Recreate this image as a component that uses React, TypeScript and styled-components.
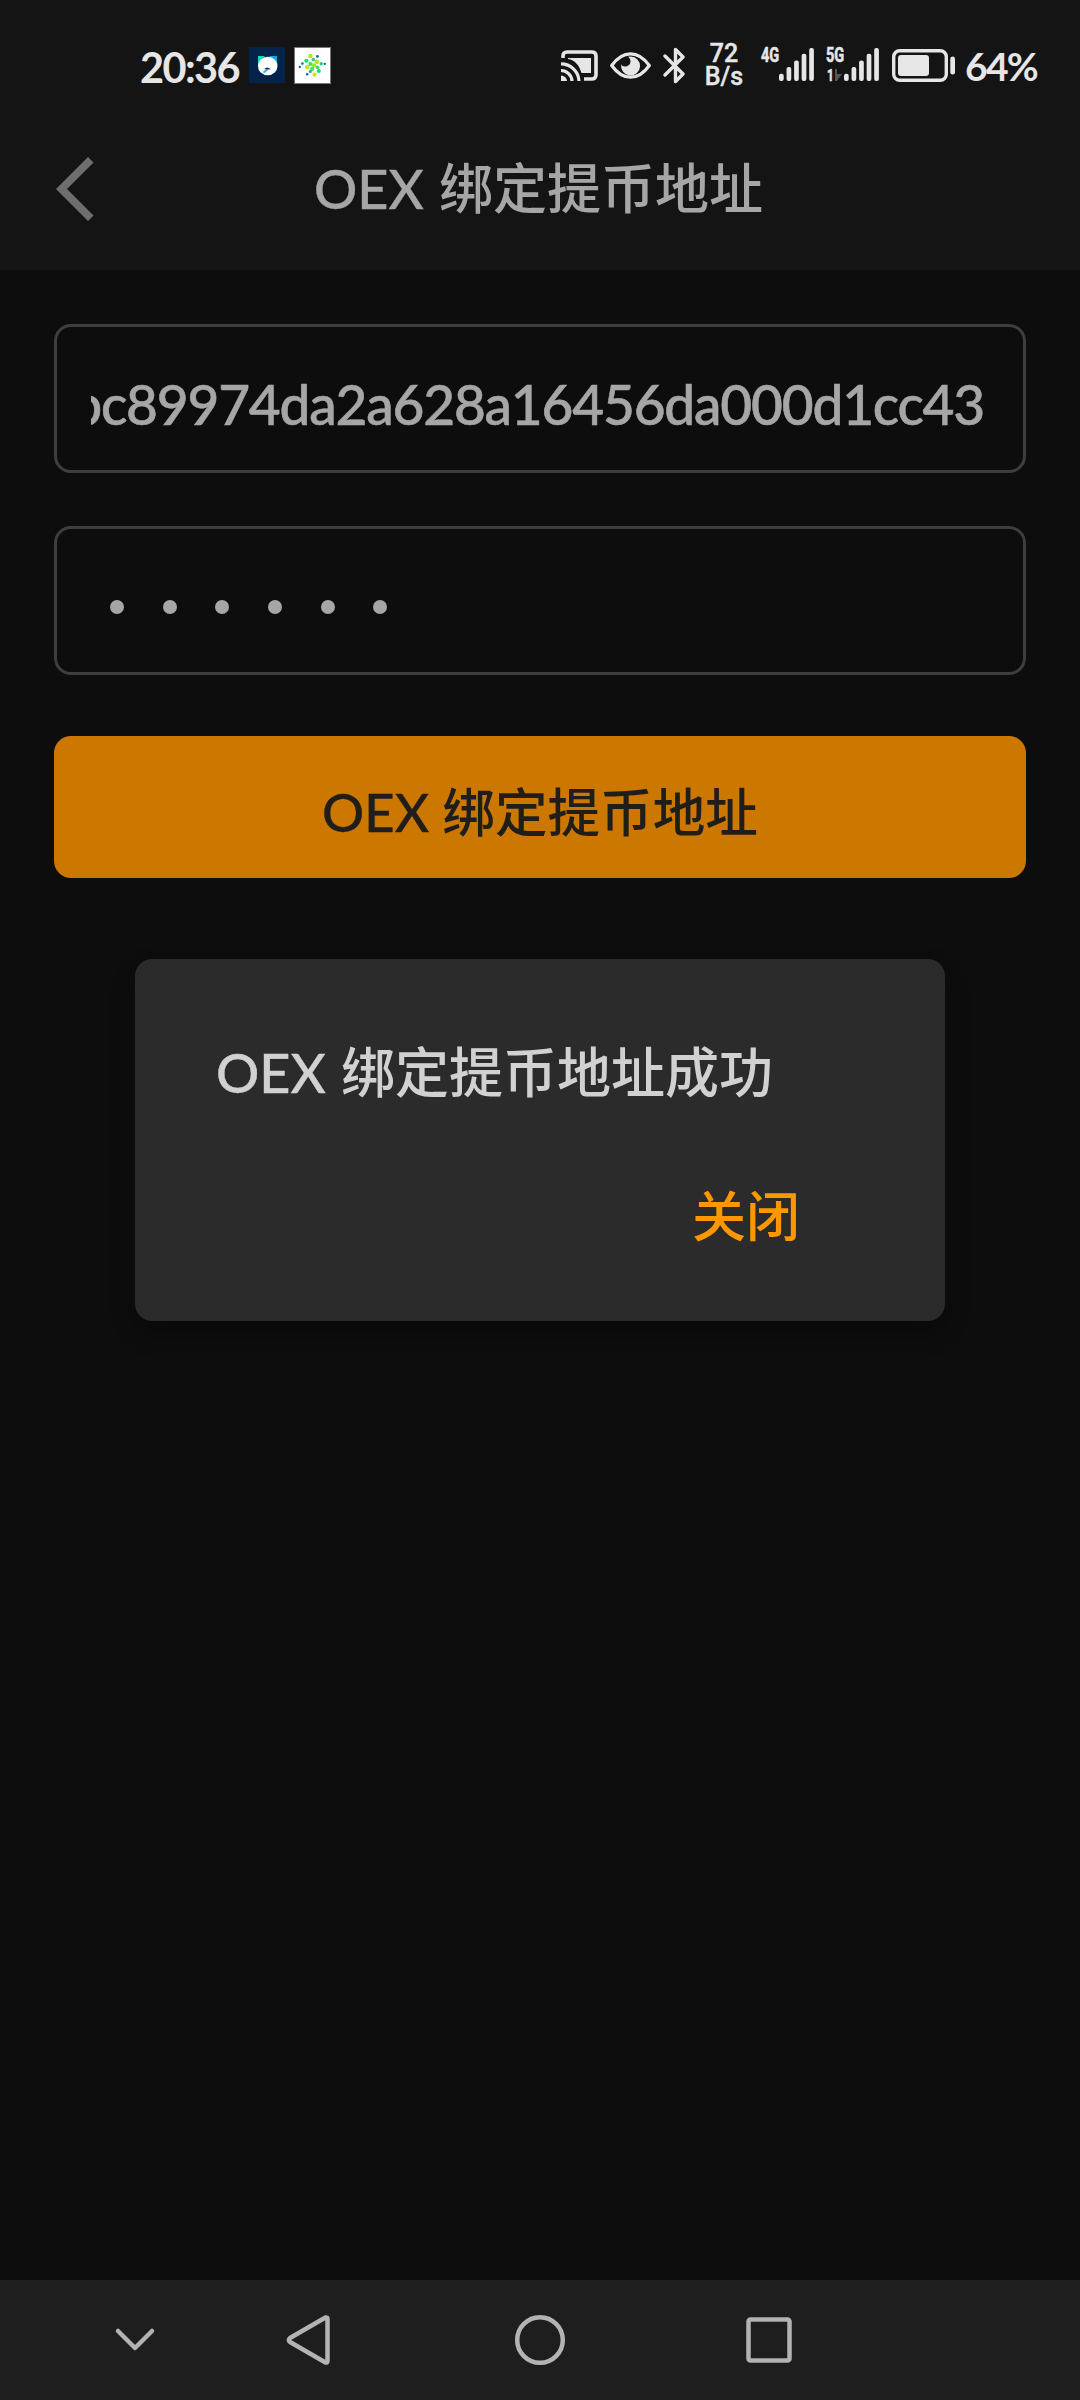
import React from "react";
import styled, { createGlobalStyle } from "styled-components";

const GlobalStyle = createGlobalStyle`
  * { box-sizing: border-box; }
  body { margin: 0; background: #0d0d0d; }
`;

const Screen = styled.div`
  width: 1080px;
  height: 2400px;
  display: flex;
  flex-direction: column;
  overflow: hidden;
  background: #0d0d0d;
  font-family: Lato, "Noto Sans CJK SC", sans-serif;
  font-weight: 500;
`;

const StatusBar = styled.div`
  height: 120px;
  padding: 0 42px 0 140px;
  display: flex;
  align-items: flex-start;
  justify-content: space-between;
  background: #141414;
  color: #e6e6e6;
`;

const StatusGroup = styled.div`
  display: flex;
  align-items: flex-start;
  padding-top: 45px;
`;

const Clock = styled.div`
  width: 109px;
  font-size: 41.5px;
  line-height: 44px;
  font-weight: 700;
  letter-spacing: -1.6px;
  white-space: nowrap;
`;

const StatusIcon = styled.svg<{ $gap?: number; $drop?: number }>`
  display: block;
  flex: none;
  margin-left: ${(p) => p.$gap ?? 0}px;
  margin-top: ${(p) => p.$drop ?? 0}px;
`;

const Speed = styled.div`
  width: 40px;
  margin-left: 19px;
  margin-right: 1px;
  margin-top: -2px;
  display: flex;
  flex-direction: column;
  align-items: center;
  font-family: Roboto, sans-serif;
  font-size: 25px;
  line-height: 22.5px;
  font-weight: 500;
  -webkit-text-stroke: 0.4px currentColor;
`;

const Signal = styled.div<{ $gap: number }>`
  display: flex;
  margin-left: ${(p) => p.$gap}px;
  margin-top: 3px;
`;

const Network = styled.div`
  width: 18px;
  font-family: Roboto, sans-serif;
  font-size: 21px;
  line-height: 15px;
  font-weight: 700;
`;

const NetworkLabel = styled.div`
  transform: scaleX(0.69);
  transform-origin: left;
  white-space: nowrap;
  -webkit-text-stroke: 0.6px currentColor;
`;

const Sim = styled.div`
  display: flex;
  margin: 6px 0 0 1px;
  font-size: 17px;
  line-height: 12px;

  svg {
    flex: none;
    margin-left: -2px;
  }
`;

const Percent = styled.div`
  width: 73px;
  margin-left: 10px;
  margin-top: -1px;
  font-size: 39px;
  line-height: 44px;
  font-weight: 700;
  letter-spacing: -1.7px;
  white-space: nowrap;
`;

const Header = styled.header`
  height: 150px;
  padding: 0 59px 0 56px;
  display: grid;
  grid-template-columns: 40px 1fr 40px;
  background: #141414;
`;

const BackButton = styled.button`
  padding: 37px 0 0;
  border: 0;
  background: none;
  display: flex;
  align-items: flex-start;
`;

const Title = styled.h1`
  margin: 0;
  padding-top: 36px;
  text-align: center;
  font-size: 54px;
  line-height: 66px;
  font-weight: 500;
  color: #a6a6a6;
  word-spacing: 1.5px;
  white-space: nowrap;
`;

const Latin = styled.span`
  -webkit-text-stroke: 0.4px currentColor;
`;

const Form = styled.main`
  flex: 1;
  padding: 54px 54px 0;
  display: flex;
  flex-direction: column;
`;

const Field = styled.div`
  height: 149px;
  margin-bottom: 53px;
  padding: 0 34px;
  border: 3px solid #3e3e3e;
  border-radius: 17px;
  color: #a6a6a6;
`;

const FieldClip = styled.div`
  height: 100%;
  display: flex;
  align-items: center;
  justify-content: flex-end;
  overflow: hidden;
`;

const Address = styled.span`
  padding-top: 10px;
  padding-right: 5px;
  font-size: 55px;
  line-height: 70px;
  letter-spacing: -1.2px;
  white-space: nowrap;
  -webkit-text-stroke: 0.6px currentColor;
`;

const Dots = styled.div`
  height: 100%;
  padding: 12px 0 0 19px;
  display: flex;
  align-items: center;
  gap: 38.7px;
`;

const Dot = styled.i`
  width: 14px;
  height: 14px;
  border-radius: 50%;
  background: #a6a6a6;
`;

const Submit = styled.button`
  flex: none;
  height: 141.75px;
  margin-top: 8px;
  padding: 11px 0 0;
  border: 0;
  border-radius: 17px;
  background: #cc7700;
  color: #201e1a;
  font: inherit;
  font-size: 52.6px;
  line-height: 66px;
  word-spacing: 0;
`;

const Dialog = styled.section`
  width: 810px;
  height: 361.5px;
  margin: 81.5px auto 0;
  padding: 78px 145px 0 81px;
  display: flex;
  flex-direction: column;
  border-radius: 17px;
  background: #2b2b2b;
  box-shadow: 0 12px 24px rgba(0, 0, 0, 0.3);
`;

const Message = styled.p`
  margin: 0;
  font-size: 54px;
  line-height: 72px;
  color: #d1d1d1;
  word-spacing: 1.5px;
  white-space: nowrap;
`;

const CloseButton = styled.button`
  align-self: flex-end;
  margin-top: 72px;
  padding: 0;
  border: 0;
  background: none;
  color: #ff9800;
  font: inherit;
  font-size: 54px;
  line-height: 72px;
`;

const NavBar = styled.nav`
  height: 120px;
  padding-left: 105px;
  display: flex;
  align-items: center;
  background: #1e1e1e;
`;

const NavButton = styled.button<{ $gap?: number }>`
  width: 60px;
  height: 60px;
  margin-left: ${(p) => p.$gap ?? 0}px;
  padding: 0;
  border: 0;
  background: none;
  svg { display: block; }
`;

const bars = [
  [73.7, 7.3], [67, 14], [60.5, 20.5], [53.7, 27.3], [48, 33],
];

const SignalBars = () => (
  <StatusIcon width="35" height="33" viewBox="0 48 35 33" fill="#e6e6e6">
    {bars.map(([y, h], i) => (
      <rect key={y} x={i * 7.55} y={y} width="4.7" height={h} rx="2" />
    ))}
  </StatusIcon>
);

const navStroke = { fill: "none", stroke: "#b3b3b3", strokeWidth: 4.5, strokeLinecap: "round", strokeLinejoin: "round" } as const;

const leafDots: [number, number, number, string][] = [
  [16.3, 9, 2.5, "#b9e41c"], [23.4, 9.4, 1.6, "#1d66b0"], [8.4, 16.6, 1.6, "#1c86b6"],
  [12.4, 13.7, 2.3, "#11dc74"], [19.3, 12.6, 2, "#38cf7b"], [22.8, 14.8, 2.5, "#b7e31b"],
  [5.8, 20, 1.3, "#1c5cb0"], [13.3, 20, 2.5, "#bee61a"], [16.4, 17, 2.3, "#3ce05c"],
  [20, 18.3, 2.4, "#9be22c"], [27.2, 16.8, 1.9, "#16cf84"], [30.8, 16.8, 1.3, "#1c5cb0"],
  [23.4, 20.3, 2.1, "#3ce05c"], [18.2, 22, 2.4, "#4ee255"], [24.8, 24, 2.3, "#17df72"],
  [16.3, 24.5, 1.8, "#19b3a0"], [20.5, 27.6, 2.3, "#c3e719"], [13.2, 27.3, 1.4, "#1c5cb0"],
];

export default function App() {
  return (
    <>
      <GlobalStyle />
      <Screen>
        <StatusBar>
          <StatusGroup>
            <Clock>20:36</Clock>
            <StatusIcon $drop={2} width="36" height="36" viewBox="0 0 36 36">
              <rect width="36" height="36" fill="#03234b" />
              <path d="M9 9h7l-7 7z" fill="#14dfae" />
              <path d="M28 9h-8l8 8z" fill="#16a6e8" />
              <ellipse cx="18.7" cy="19" rx="9.8" ry="9.3" fill="#fff" />
              <path d="M15 22l3-1.5 4 1.5-4 .8z" fill="#062b49" />
              <path d="M14.500 25.500l4-3" stroke="#22b6df" strokeWidth="1.600" />
            </StatusIcon>
            <StatusIcon $gap={9} $drop={2} width="37" height="37" viewBox="0 0 37 37">
              <rect x=".5" y=".5" width="36" height="36" fill="#fff" stroke="#777" />
              {leafDots.map(([x, y, r, fill]) => (
                <circle key={`${x}-${y}`} cx={x} cy={y} r={r * 0.9} fill={fill} />
              ))}
            </StatusIcon>
          </StatusGroup>
          <StatusGroup>
            <StatusIcon $drop={5} width="37" height="31" viewBox="0 0 37 31" fill="none" stroke="#e6e6e6">
              <path d="M2 8V6Q2 2 6 2h24.5Q35 2 35 6v18.5Q35 29 30.500 29H23" strokeWidth="3.600" />
              <path d="M7 8h23v15h-9.500C18 15 14 10 7 9z" fill="#e6e6e6" stroke="none" />
              <path d="M0 25.500A6 6 0 0 1 6 31H0z" fill="#e6e6e6" stroke="none" />
              <path d="M0 20.500A11 11 0 0 1 11 31M0 13.800A18 18 0 0 1 18 31" strokeWidth="3.200" />
            </StatusIcon>
            <StatusIcon $gap={12} $drop={7} width="41" height="27" viewBox="0 0 41 27">
              <path d="M1.700 13.500Q10 1.800 20.500 1.800T39.300 13.500Q31 25.200 20.500 25.200T1.700 13.500z" fill="none" stroke="#e6e6e6" strokeWidth="3.200" strokeLinejoin="round" />
              <path d="M20.500 4.500a9.500 9.500 0 1 1-9.200 7.600c.5 3 5 3.200 7.400 1.200 2.600-2 2.400-6-.6-8.500z" fill="#e6e6e6" />
            </StatusIcon>
            <StatusIcon $gap={12} $drop={2} width="22" height="37" viewBox="0 0 22 37">
              <path d="M2 9l18 18-7.500 7.500V2.500L20 10 2 28" fill="none" stroke="#e6e6e6" strokeWidth="3.400" strokeLinecap="round" strokeLinejoin="round" />
            </StatusIcon>
            <Speed><span>72</span><span>B/s</span></Speed>
            <Signal $gap={16}>
              <Network><NetworkLabel>4G</NetworkLabel></Network>
              <SignalBars />
            </Signal>
            <Signal $gap={12}>
              <Network>
                <NetworkLabel>5G</NetworkLabel>
                <Sim>
                  <NetworkLabel>1</NetworkLabel>
                  <svg width="7" height="12" viewBox="0 0 7 12"><path d="M0 0h2v5h5L2 12H0z" fill="#555" /></svg>
                </Sim>
              </Network>
              <SignalBars />
            </Signal>
            <StatusIcon $gap={13} $drop={4} width="63" height="33" viewBox="0 0 63 33">
              <rect x="1.700" y="1.700" width="52.600" height="29.600" rx="6" fill="none" stroke="#e6e6e6" strokeWidth="3.400" />
              <rect x="6" y="6" width="31" height="21" rx="3" fill="#e6e6e6" />
              <rect x="58.300" y="7.500" width="4.700" height="18" rx="2.300" fill="#e6e6e6" />
            </StatusIcon>
            <Percent>64%</Percent>
          </StatusGroup>
        </StatusBar>
        <Header>
          <BackButton aria-label="返回">
            <svg width="38" height="64" viewBox="0 0 38 64">
              <path d="M32 0l5.500 5.500L11 32l26.500 26.500L32 64 0 32z" fill="#6e6e6e" />
            </svg>
          </BackButton>
          <Title><Latin>OEX</Latin> 绑定提币地址</Title>
        </Header>
        <Form>
          <Field>
            <FieldClip><Address>bc89974da2a628a16456da000d1cc43</Address></FieldClip>
          </Field>
          <Field>
            <Dots>{Array.from({ length: 6 }, (_, i) => <Dot key={i} />)}</Dots>
          </Field>
          <Submit><Latin>OEX</Latin> 绑定提币地址</Submit>
          <Dialog role="dialog">
            <Message><Latin>OEX</Latin> 绑定提币地址成功</Message>
            <CloseButton>关闭</CloseButton>
          </Dialog>
        </Form>
        <NavBar>
          <NavButton aria-label="收起">
            <svg width="60" height="60" {...navStroke}><path d="M13 21l17 17 17-17" /></svg>
          </NavButton>
          <NavButton aria-label="后退" $gap={115}>
            <svg width="60" height="60" {...navStroke}><path d="M45.500 7.500L10 28q-2 2 0 4l35.500 20.500q2 .5 2-1.500V9q0-2-2-1.500z" /></svg>
          </NavButton>
          <NavButton aria-label="主页" $gap={170}>
            <svg width="60" height="60" {...navStroke}><circle cx="30" cy="30" r="22.800" /></svg>
          </NavButton>
          <NavButton aria-label="最近" $gap={169}>
            <svg width="60" height="60" {...navStroke}><rect x="9.500" y="9.500" width="41" height="41" rx="2" /></svg>
          </NavButton>
        </NavBar>
      </Screen>
    </>
  );
}
